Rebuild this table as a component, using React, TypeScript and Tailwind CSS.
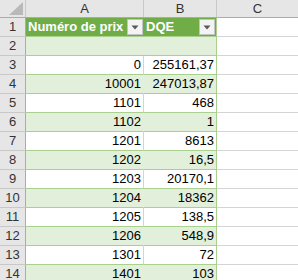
import React from "react";

const rows: [number, string, string][] = [
  [3, "0", "255161,37"],
  [4, "10001", "247013,87"],
  [5, "1101", "468"],
  [6, "1102", "1"],
  [7, "1201", "8613"],
  [8, "1202", "16,5"],
  [9, "1203", "20170,1"],
  [10, "1204", "18362"],
  [11, "1205", "138,5"],
  [12, "1206", "548,9"],
  [13, "1301", "72"],
  [14, "1401", "103"],
];

function FilterButton() {
  return (
    <div className="w-[16px] h-[16px] mr-[1px] mb-[1px] shrink-0 bg-[#f3f3f3] border border-[#c3c3c3] flex items-center justify-center">
      <svg width="8" height="5" viewBox="0 0 8 5">
        <path d="M0.5 0.5 L7.5 0.5 L4 4.5 Z" fill="#595959" />
      </svg>
    </div>
  );
}

function RowHead({ n }: { n: number }) {
  return (
    <div className="w-[26px] shrink-0 bg-[#e6e6e6] border-r border-r-[#ababab] border-b border-b-[#c8c8c8] flex items-end justify-center pb-[1px] text-[13px] leading-[16px] text-[#333]">
      {n}
    </div>
  );
}

export default function App() {
  return (
    <div className="w-[298px] h-[280px] overflow-hidden bg-white font-['Liberation_Sans',Arial,sans-serif] text-black select-none">
      {/* column headers */}
      <div className="flex h-[18px] bg-[#e6e6e6] border-b border-b-[#ababab] text-[13px] text-[#333]">
        <div className="w-[26px] shrink-0 border-r border-r-[#c8c8c8] flex items-end justify-end pr-[2px] pb-[2px]">
          <svg width="14" height="13" viewBox="0 0 14 13">
            <path d="M14 0 L14 13 L0 13 Z" fill="#b9b9b9" />
          </svg>
        </div>
        <div className="w-[118px] shrink-0 border-r border-r-[#c8c8c8] flex items-center justify-center">A</div>
        <div className="w-[73px] shrink-0 border-r border-r-[#c8c8c8] flex items-center justify-center">B</div>
        <div className="flex-1 flex items-center justify-center">C</div>
      </div>

      {/* row 1: table header */}
      <div className="flex h-[19px]">
        <RowHead n={1} />
        <div className="w-[118px] shrink-0 bg-[#70ad47] border-b border-b-[#a9d08e] flex items-end justify-between pl-[2px]">
          <span className="text-white font-bold text-[13px] leading-[15px] pb-[2px]">Numéro de prix</span>
          <FilterButton />
        </div>
        <div className="w-[73px] shrink-0 bg-[#70ad47] border-b border-b-[#a9d08e] border-r border-r-[#a9d08e] flex items-end justify-between pl-[2px]">
          <span className="text-white font-bold text-[13px] leading-[15px] pb-[2px]">DQE</span>
          <FilterButton />
        </div>
        <div className="flex-1 border-b border-b-[#d4d4d4]" />
      </div>

      {/* row 2: empty banded */}
      <div className="flex h-[19px]">
        <RowHead n={2} />
        <div className="w-[118px] shrink-0 bg-[#e2efda] border-b border-b-[#a9d08e]" />
        <div className="w-[73px] shrink-0 bg-[#e2efda] border-b border-b-[#a9d08e] border-r border-r-[#a9d08e]" />
        <div className="flex-1 border-b border-b-[#d4d4d4]" />
      </div>

      {rows.map(([n, a, b]) => {
        const band = n % 2 === 0;
        return (
          <div key={n} className="flex h-[19px]">
            <RowHead n={n} />
            <div
              className={
                band
                  ? "w-[118px] shrink-0 bg-[#e2efda] border-b border-b-[#a9d08e] border-r border-r-[#e2efda] flex items-end justify-end pr-[2px] pb-[2px] text-[13px] leading-[15px]"
                  : "w-[118px] shrink-0 bg-white border-b border-b-[#a9d08e] border-r border-r-[#d4d4d4] flex items-end justify-end pr-[2px] pb-[2px] text-[13px] leading-[15px]"
              }
            >
              {a}
            </div>
            <div
              className={
                band
                  ? "w-[73px] shrink-0 bg-[#e2efda] border-b border-b-[#a9d08e] border-r border-r-[#a9d08e] flex items-end justify-end pr-[2px] pb-[2px] text-[13px] leading-[15px]"
                  : "w-[73px] shrink-0 bg-white border-b border-b-[#a9d08e] border-r border-r-[#a9d08e] flex items-end justify-end pr-[2px] pb-[2px] text-[13px] leading-[15px]"
              }
            >
              {b}
            </div>
            <div className="flex-1 border-b border-b-[#d4d4d4]" />
          </div>
        );
      })}
    </div>
  );
}
